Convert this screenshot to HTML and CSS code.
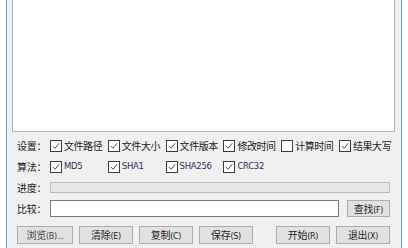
FILE: index.html
```html
<!DOCTYPE html>
<html lang="zh">
<head>
<meta charset="utf-8">
<link rel="stylesheet" href="styles.css">
</head>
<body>
<div class="window">
  <div class="output"></div>

  <div class="row">
    <span class="label">设置：</span>
    <div class="opts">
      <label class="opt"><span class="cb on"><svg viewBox="0 0 11 11"><polyline points="2,5.5 4.5,8 9,2.5"/></svg></span><span class="txt">文件路径</span></label>
      <label class="opt"><span class="cb on"><svg viewBox="0 0 11 11"><polyline points="2,5.5 4.5,8 9,2.5"/></svg></span><span class="txt">文件大小</span></label>
      <label class="opt"><span class="cb on"><svg viewBox="0 0 11 11"><polyline points="2,5.5 4.5,8 9,2.5"/></svg></span><span class="txt">文件版本</span></label>
      <label class="opt"><span class="cb on"><svg viewBox="0 0 11 11"><polyline points="2,5.5 4.5,8 9,2.5"/></svg></span><span class="txt">修改时间</span></label>
      <label class="opt"><span class="cb"></span><span class="txt">计算时间</span></label>
      <label class="opt"><span class="cb on"><svg viewBox="0 0 11 11"><polyline points="2,5.5 4.5,8 9,2.5"/></svg></span><span class="txt">结果大写</span></label>
    </div>
  </div>

  <div class="row">
    <span class="label">算法：</span>
    <div class="opts">
      <label class="opt"><span class="cb on"><svg viewBox="0 0 11 11"><polyline points="2,5.5 4.5,8 9,2.5"/></svg></span><span class="alg">MD5</span></label>
      <label class="opt"><span class="cb on"><svg viewBox="0 0 11 11"><polyline points="2,5.5 4.5,8 9,2.5"/></svg></span><span class="alg">SHA1</span></label>
      <label class="opt"><span class="cb on"><svg viewBox="0 0 11 11"><polyline points="2,5.5 4.5,8 9,2.5"/></svg></span><span class="alg">SHA256</span></label>
      <label class="opt"><span class="cb on"><svg viewBox="0 0 11 11"><polyline points="2,5.5 4.5,8 9,2.5"/></svg></span><span class="alg">CRC32</span></label>
    </div>
  </div>

  <div class="row">
    <span class="label">进度：</span>
    <div class="progress"></div>
  </div>

  <div class="row">
    <span class="label">比较：</span>
    <div class="input"></div>
    <button class="btn find"><span class="cap">查找<span class="key">(F)</span></span></button>
  </div>

  <div class="buttons">
    <button class="btn wide dim"><span class="cap">浏览<span class="key">(B)...</span></span></button>
    <button class="btn"><span class="cap">清除<span class="key">(E)</span></span></button>
    <button class="btn"><span class="cap">复制<span class="key">(C)</span></span></button>
    <button class="btn"><span class="cap">保存<span class="key">(S)</span></span></button>
    <button class="btn push"><span class="cap">开始<span class="key">(R)</span></span></button>
    <button class="btn"><span class="cap">退出<span class="key">(X)</span></span></button>
  </div>
</div>
</body>
</html>
```

FILE: styles.css
```css
html, body {
  margin: 0;
  padding: 0;
  background: #ffffff;
  width: 408px;
  height: 248px;
  overflow: hidden;
}

body {
  font-family: "Noto Sans CJK SC", "Microsoft YaHei", sans-serif;
  font-size: 10px;
  color: #1a1a1a;
}

.window {
  box-sizing: border-box;
  margin-left: 6px;
  width: 396px;
  height: 260px;
  background: #f0f0f0;
  border-left: 1px solid #6ea2db;
  border-right: 1px solid #6ea2db;
  padding: 0 6px 0 5px;
}

.output {
  box-sizing: border-box;
  height: 132px;
  background: #ffffff;
  border: 1px solid #b4b4b4;
  border-top: none;
  margin-bottom: 3px;
}

.row {
  display: flex;
  align-items: center;
  height: 21px;
  padding: 0 5px;
}

.label {
  flex: none;
  width: 33px;
  white-space: nowrap;
  line-height: 1;
  letter-spacing: -0.3px;
}

.opts {
  display: grid;
  grid-template-columns: repeat(6, 57.8px);
  align-items: center;
}

.opt {
  display: flex;
  align-items: center;
  white-space: nowrap;
}

.cb {
  box-sizing: border-box;
  flex: none;
  width: 12px;
  height: 12px;
  border: 1px solid #3c3c3c;
  background: #ffffff;
  margin-right: 2px;
  display: flex;
}

.cb svg {
  width: 10px;
  height: 10px;
  fill: none;
  stroke: #3a3a3a;
  stroke-width: 1;
}

.txt {
  line-height: 1;
  letter-spacing: -0.45px;
}

.alg {
  font-family: "DejaVu Sans", "Liberation Sans", sans-serif;
  font-size: 8.5px;
  color: #2e2e5e;
  line-height: 1;
  letter-spacing: -0.3px;
}

.progress {
  box-sizing: border-box;
  flex: 1;
  height: 11px;
  background: #e6e6e6;
  border: 1px solid #bcbcbc;
}

.input {
  box-sizing: border-box;
  flex: 1;
  height: 17px;
  background: #ffffff;
  border: 1px solid #7a7a7a;
  margin-right: 8px;
}

.btn {
  box-sizing: border-box;
  font-family: inherit;
  font-size: 10px;
  color: #222222;
  background: #e1e1e1;
  border: 1px solid #adadad;
  border-radius: 0;
  padding: 0;
  margin: 0;
  height: 18px;
  width: 54px;
  text-align: center;
  flex: none;
}

.cap {
  display: inline-block;
  line-height: 16px;
  white-space: nowrap;
  letter-spacing: -0.3px;
}

.btn .key {
  font-family: "DejaVu Sans", "Liberation Sans", sans-serif;
  font-size: 8px;
  letter-spacing: -0.3px;
}

.find {
  width: 43px;
  height: 17px;
}

.find .cap {
  line-height: 15px;
}

.buttons {
  display: flex;
  gap: 6px;
  padding: 0 5px;
  margin-top: 7px;
}

.wide {
  width: 56px;
}

.dim {
  color: #444444;
}

.push {
  margin-left: auto;
}
```
